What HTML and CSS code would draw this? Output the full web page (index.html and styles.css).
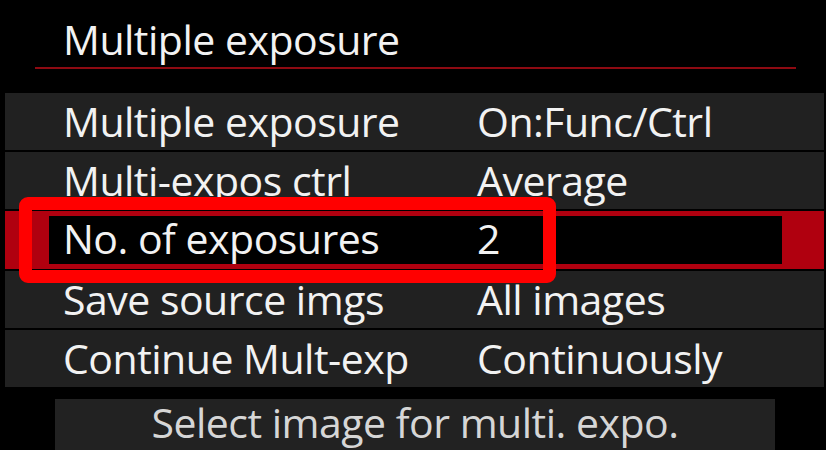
FILE: index.html
```html
<!DOCTYPE html>
<html lang="en">
<head>
<meta charset="utf-8">
<title>Multiple exposure</title>
<link rel="stylesheet" href="styles.css">
</head>
<body>
<div class="screen">
  <div class="header">Multiple exposure</div>
  <div class="menu">
    <div class="row"><span class="label">Multiple exposure</span><span class="value">On:Func/Ctrl</span></div>
    <div class="row"><span class="label">Multi-expos ctrl</span><span class="value">Average</span></div>
    <div class="row row-selected">
      <div class="sel-box"><span class="label">No. of exposures</span><span class="value">2</span></div>
    </div>
    <div class="row"><span class="label">Save source imgs</span><span class="value">All images</span></div>
    <div class="row"><span class="label">Continue Mult-exp</span><span class="value">Continuously</span></div>
  </div>
  <div class="help">Select image for multi. expo.</div>
  <div class="annotation"></div>
</div>
</body>
</html>
```

FILE: styles.css
```css
html, body {
  margin: 0;
  padding: 0;
  background: #000;
}
body {
  width: 826px;
  height: 450px;
  overflow: hidden;
  font-family: "Open Sans", "Noto Sans", sans-serif;
  font-size: 41px;
  letter-spacing: -0.5px;
  color: #f2f2f2;
}
.screen {
  position: relative;
  width: 826px;
  height: 450px;
}
.header {
  margin: 0 30px 0 35px;
  padding: 15px 0 3px 28px;
  line-height: 49px;
  border-bottom: 2px solid #8e0a12;
  white-space: nowrap;
}
.menu {
  margin: 24px 2px 0 5px;
  display: flex;
  flex-direction: column;
  gap: 2px;
}
.row {
  height: 57px;
  line-height: 57px;
  background: #212121;
  display: grid;
  grid-template-columns: 414px 1fr;
  padding-left: 58px;
  white-space: nowrap;
}
.row-selected {
  display: block;
  height: 48px;
  padding: 5px 42px 5px 44px;
  background: #b0000f;
}
.sel-box {
  height: 45px;
  padding: 0 0 3px 14px;
  line-height: 45px;
  background: #000;
  display: grid;
  grid-template-columns: 414px 1fr;
}
.help {
  margin: 12px 51px 0 55px;
  height: 51px;
  line-height: 46px;
  background: #222;
  color: #d6d6d6;
  text-align: center;
  white-space: nowrap;
}
.annotation {
  position: absolute;
  left: 19px;
  top: 197px;
  width: 511px;
  height: 60px;
  border: 13px solid #ff0000;
  border-radius: 9px;
}
```
